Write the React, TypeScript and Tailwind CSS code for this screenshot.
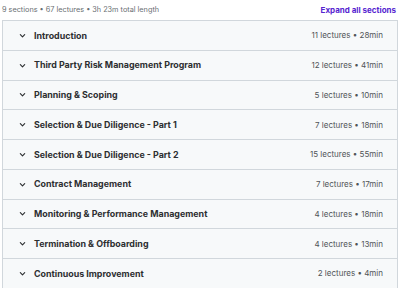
const sections = [
  { title: "Introduction", lectures: 11, length: "28min" },
  { title: "Third Party Risk Management Program", lectures: 12, length: "41min" },
  { title: "Planning & Scoping", lectures: 5, length: "10min" },
  { title: "Selection & Due Diligence - Part 1", lectures: 7, length: "18min" },
  { title: "Selection & Due Diligence - Part 2", lectures: 15, length: "55min" },
  { title: "Contract Management", lectures: 7, length: "17min" },
  { title: "Monitoring & Performance Management", lectures: 4, length: "18min" },
  { title: "Termination & Offboarding", lectures: 4, length: "13min" },
  { title: "Continuous Improvement", lectures: 2, length: "4min" },
];

function Chevron() {
  return (
    <svg width="7" height="7" viewBox="0 0 8 8" className="text-[#2d2f31]">
      <path d="M1.5 3 L4 5.5 L6.5 3" fill="none" stroke="currentColor" strokeWidth="1.3" strokeLinecap="round" strokeLinejoin="round" />
    </svg>
  );
}

export default function App() {
  return (
    <div className="h-[288px] w-[400px] overflow-hidden bg-white font-['Inter',sans-serif] text-[#2d2f31]">
      <div className="flex h-[20px] items-center justify-between pl-[2px] pr-[4px]">
        <span className="text-[7.3px] text-[#6a6f73]">9 sections • 67 lectures • 3h 23m total length</span>
        <span className="text-[8px] font-bold text-[#5624d0]">Expand all sections</span>
      </div>
      <div className="mx-[2px] w-[396px] border-x border-[#d1d7dc]">
        {sections.map((s) => (
          <div
            key={s.title}
            className="flex h-[29.75px] items-center border-t border-[#d1d7dc] bg-[#f7f9fa] pl-[16px] pr-[14px]"
          >
            <Chevron />
            <span className="ml-[8px] flex-1 text-[8.9px] font-bold">{s.title}</span>
            <span className="text-[8px] text-[#505457]">
              {s.lectures} lectures • {s.length}
            </span>
          </div>
        ))}
      </div>
    </div>
  );
}
